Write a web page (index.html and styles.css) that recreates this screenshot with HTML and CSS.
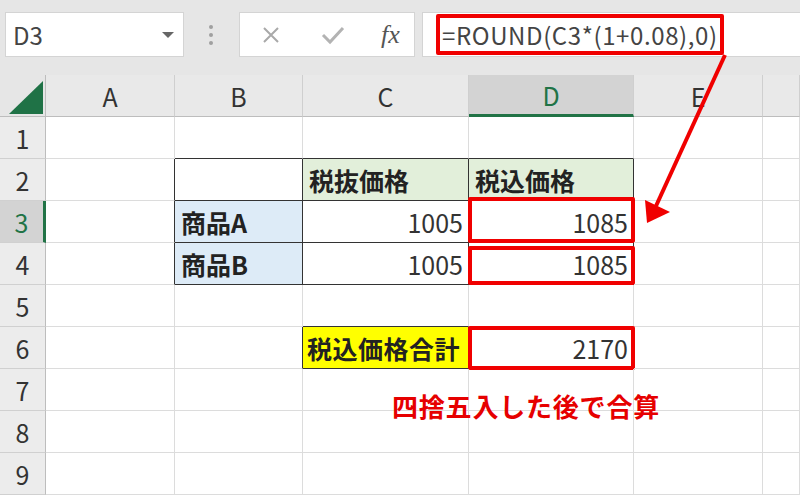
FILE: index.html
```html
<!DOCTYPE html>
<html lang="ja">
<head>
    <meta charset="utf-8">
    <title>ROUND関数で税込価格を計算</title>
    <link rel="stylesheet" href="styles.css">
</head>
<body>
    <div class="window">
        <div class="toolbar">
            <div class="namebox">
                <span>D3</span>
                <span class="caret"></span>
            </div>
            <div class="grip"><i></i><i></i><i></i></div>
            <div class="fx-buttons">
                <svg class="btn-icon" width="20" height="20" viewBox="0 0 20 20"><path d="M3 3 L17 17 M17 3 L3 17" stroke="#a9a9a9" stroke-width="2" fill="none"/></svg>
                <svg class="btn-icon" width="24" height="20" viewBox="0 0 24 20"><path d="M2 10 L9 17 L22 3" stroke="#b3b3b3" stroke-width="3" fill="none"/></svg>
                <span class="fx">fx</span>
            </div>
            <div class="formula">
                <span class="formula-text">=ROUND(C3*(1+0.08),0)</span>
            </div>
        </div>

        <div class="sheet">
            <!-- column headers -->
            <div class="corner"><span class="select-all"></span></div>
            <div class="colhead">A</div>
            <div class="colhead">B</div>
            <div class="colhead">C</div>
            <div class="colhead active">D</div>
            <div class="colhead">E</div>
            <div class="colhead"></div>

            <!-- row 1 -->
            <div class="rowhead">1</div>
            <div class="cell"></div>
            <div class="cell bb"></div>
            <div class="cell bb"></div>
            <div class="cell bb"></div>
            <div class="cell"></div>
            <div class="cell"></div>

            <!-- row 2 -->
            <div class="rowhead">2</div>
            <div class="cell rb"></div>
            <div class="cell bx"></div>
            <div class="cell bx head-green">税抜価格</div>
            <div class="cell bx head-green">税込価格</div>
            <div class="cell"></div>
            <div class="cell"></div>

            <!-- row 3 -->
            <div class="rowhead active">3</div>
            <div class="cell rb"></div>
            <div class="cell bx item">商品A</div>
            <div class="cell bx num">1005</div>
            <div class="cell bx num"><span>1085</span><b class="mark mark-d3"></b></div>
            <div class="cell"></div>
            <div class="cell"></div>

            <!-- row 4 -->
            <div class="rowhead">4</div>
            <div class="cell rb"></div>
            <div class="cell bx item">商品B</div>
            <div class="cell bx num">1005</div>
            <div class="cell bx num"><span>1085</span><b class="mark mark-d4"></b></div>
            <div class="cell"></div>
            <div class="cell"></div>

            <!-- row 5 -->
            <div class="rowhead">5</div>
            <div class="cell"></div>
            <div class="cell"></div>
            <div class="cell bb"></div>
            <div class="cell"></div>
            <div class="cell"></div>
            <div class="cell"></div>

            <!-- row 6 -->
            <div class="rowhead">6</div>
            <div class="cell"></div>
            <div class="cell rb"></div>
            <div class="cell bx total">税込価格合計</div>
            <div class="cell num"><span>2170</span><b class="mark mark-d6"></b></div>
            <div class="cell"></div>
            <div class="cell"></div>

            <!-- rows 7-9 -->
            <div class="rowhead">7</div>
            <div class="cell"></div>
            <div class="cell"></div>
            <div class="cell"></div>
            <div class="cell"></div>
            <div class="cell"></div>
            <div class="cell"></div>

            <div class="rowhead">8</div>
            <div class="cell"></div>
            <div class="cell"></div>
            <div class="cell"></div>
            <div class="cell"></div>
            <div class="cell"></div>
            <div class="cell"></div>

            <div class="rowhead">9</div>
            <div class="cell"></div>
            <div class="cell"></div>
            <div class="cell"></div>
            <div class="cell"></div>
            <div class="cell"></div>
            <div class="cell"></div>

            <div class="note">四捨五入した後で合算</div>
        </div>

        <!-- arrow from the formula to D3 -->
        <svg class="arrow" width="800" height="496" viewBox="0 0 800 496">
            <line x1="725" y1="55" x2="656" y2="206" stroke="#f00000" stroke-width="4"/>
            <polygon points="645,200 670,212 647,223" fill="#f00000"/>
        </svg>
    </div>
</body>
</html>
```

FILE: styles.css
```css
body {
    margin: 0;
    background: #fff;
    font-family: "Noto Sans CJK JP", "Noto Sans", sans-serif;
    color: #222;
}
.window {
    position: relative;
    width: 800px;
    height: 496px;
    overflow: hidden;
}

/* formula bar */
.toolbar {
    height: 75px;
    box-sizing: border-box;
    padding: 12px 0 0 5px;
    background: #e6e6e6;
    display: flex;
    align-items: flex-start;
}
.namebox {
    width: 179px;
    height: 45px;
    box-sizing: border-box;
    background: #fff;
    border: 1px solid #d4d4d4;
    display: flex;
    align-items: center;
    justify-content: space-between;
    padding: 0 9px 0 7px;
    font-size: 24px;
    color: #444;
}
.caret {
    width: 0;
    height: 0;
    border-left: 6px solid transparent;
    border-right: 6px solid transparent;
    border-top: 6px solid #666;
}
.grip {
    margin: 13px 0 0 25px;
    display: flex;
    flex-direction: column;
    gap: 4px;
}
.grip i {
    width: 4px;
    height: 4px;
    border-radius: 50%;
    background: #a0a0a0;
}
.fx-buttons {
    margin-left: 26px;
    width: 176px;
    height: 45px;
    box-sizing: border-box;
    background: #fff;
    border: 1px solid #d4d4d4;
    display: flex;
    align-items: center;
    padding: 0 0 0 21px;
}
.btn-icon {
    margin-right: 40px;
}
.btn-icon + .btn-icon {
    margin-right: 36px;
}
.fx {
    font-family: "Liberation Serif", serif;
    font-style: italic;
    font-size: 26px;
    color: #555;
}
.formula {
    margin-left: 7px;
    flex: 1;
    height: 45px;
    box-sizing: border-box;
    background: #fff;
    border: 1px solid #d4d4d4;
    border-right: none;
    padding: 1px 0 0 13px;
}
.formula-text {
    display: inline-block;
    height: 41px;
    box-sizing: border-box;
    border: 4px solid #f00000;
    border-radius: 2px;
    padding: 0 2px 0 2px;
    font-size: 24px;
    letter-spacing: 0.6px;
    line-height: 33px;
    color: #444;
    white-space: nowrap;
}

/* worksheet */
.sheet {
    position: relative;
    display: grid;
    grid-template-columns: 46px 129px 128px 166px 165px 129px 37px;
    grid-auto-rows: 42px;
    font-size: 25px;
}
.sheet > div {
    box-sizing: border-box;
}
.corner {
    position: relative;
    background: #e6e6e6;
    border-right: 1px solid #bdbdbd;
    border-bottom: 1px solid #bdbdbd;
}
.select-all {
    position: absolute;
    right: 2px;
    bottom: 2px;
    width: 0;
    height: 0;
    border-left: 34px solid transparent;
    border-bottom: 33px solid #1f7246;
}
.colhead {
    background: #e9e9e9;
    border-right: 1px solid #cfcfcf;
    border-bottom: 1px solid #bdbdbd;
    display: flex;
    align-items: center;
    justify-content: center;
    color: #333;
}
.colhead.active {
    background: #d3d3d3;
    color: #217346;
    border-bottom: 3px solid #217346;
}
.rowhead {
    background: #ececec;
    border-right: 1px solid #bdbdbd;
    border-bottom: 1px solid #d0d0d0;
    display: flex;
    align-items: center;
    justify-content: center;
    color: #333;
}
.rowhead.active {
    background: #d3d3d3;
    color: #217346;
    border-right: 3px solid #217346;
}
.cell {
    position: relative;
    border-right: 1px solid #dcdcdc;
    border-bottom: 1px solid #dcdcdc;
    display: flex;
    align-items: center;
    padding: 0 6px;
    white-space: nowrap;
}
.cell.rb {
    border-right-color: #333;
}
.cell.bb {
    border-bottom-color: #333;
}
.cell.bx {
    border-right-color: #333;
    border-bottom-color: #333;
}
.head-green {
    background: #e2efda;
    font-weight: bold;
}
.item {
    background: #ddebf7;
    font-weight: bold;
}
.total {
    background: #ffff00;
    font-weight: bold;
    padding: 0 4px;
    letter-spacing: 0.5px;
}
.num {
    justify-content: flex-end;
    padding-right: 5px;
    color: #333;
}

/* red highlight boxes */
.mark {
    position: absolute;
    left: -1px;
    right: -2px;
    border: 4px solid #f00000;
    border-radius: 2px;
}
.mark-d3 {
    top: -4px;
    bottom: -1px;
}
.mark-d4 {
    top: 3px;
    bottom: -1px;
}
.mark-d6 {
    top: -1px;
    bottom: -2px;
}
.note {
    position: absolute;
    left: 392px;
    top: 312px;
    font-size: 26px;
    font-weight: bold;
    letter-spacing: 0.8px;
    color: #e60000;
    white-space: nowrap;
}
.arrow {
    position: absolute;
    top: 0;
    left: 0;
    pointer-events: none;
}
```
